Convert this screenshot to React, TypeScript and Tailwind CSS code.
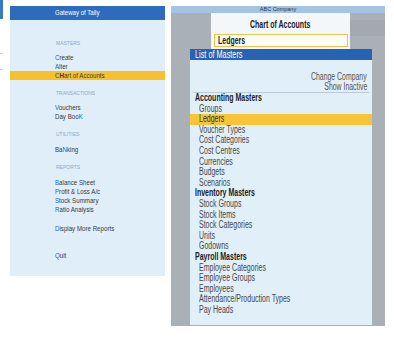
import React from "react";

type Row =
  | { kind: "label"; text: string; mt: string }
  | { kind: "item"; before?: string; hot: string; after: string; mt?: string; active?: boolean };

const GATEWAY: Row[] = [
  { kind: "label", text: "Masters", mt: "mt-[20px]" },
  { kind: "item", hot: "C", after: "reate", mt: "mt-[6.5px]" },
  { kind: "item", hot: "A", after: "lter" },
  { kind: "item", before: "C", hot: "H", after: "art of Accounts", active: true },
  { kind: "label", text: "Transactions", mt: "mt-[9.5px]" },
  { kind: "item", hot: "V", after: "ouchers", mt: "mt-[7px]" },
  { kind: "item", before: "Day Boo", hot: "K", after: "" },
  { kind: "label", text: "Utilities", mt: "mt-[10px]" },
  { kind: "item", before: "Ba", hot: "N", after: "king", mt: "mt-[8px]" },
  { kind: "label", text: "Reports", mt: "mt-[9.5px]" },
  { kind: "item", hot: "B", after: "alance Sheet", mt: "mt-[8px]" },
  { kind: "item", hot: "P", after: "rofit & Loss A/c" },
  { kind: "item", hot: "S", after: "tock Summary" },
  { kind: "item", hot: "R", after: "atio Analysis" },
  { kind: "item", hot: "D", after: "isplay More Reports", mt: "mt-[9px]" },
  { kind: "item", hot: "Q", after: "uit", mt: "mt-[18px]" },
];

const MASTERS: { heading: string; items: string[] }[] = [
  {
    heading: "Accounting Masters",
    items: ["Groups", "Ledgers", "Voucher Types", "Cost Categories", "Cost Centres", "Currencies", "Budgets", "Scenarios"],
  },
  {
    heading: "Inventory Masters",
    items: ["Stock Groups", "Stock Items", "Stock Categories", "Units", "Godowns"],
  },
  {
    heading: "Payroll Masters",
    items: ["Employee Categories", "Employee Groups", "Employees", "Attendance/Production Types", "Pay Heads"],
  },
];

// the screenshot is squeezed sideways (Arial Narrow style), so squash the glyphs
function Sq({
  children,
  cls = "origin-left scale-x-[0.7]",
}: {
  children: React.ReactNode;
  cls?: string;
}) {
  return <span className={`inline-block whitespace-nowrap ${cls}`}>{children}</span>;
}

function GatewayPanel() {
  return (
    <div className="mt-[6px] ml-[7px] flex h-[270px] w-[155px] flex-col bg-[#dfeef8]">
      <div className="flex h-[14px] items-center bg-[#2d6bbd] pl-[45px] text-[8px] text-white">
        <Sq cls="origin-left scale-x-[0.76]">Gateway of Tally</Sq>
      </div>
      {GATEWAY.map((row, i) =>
        row.kind === "label" ? (
          <div key={i} className={`${row.mt} pl-[46px] text-[5px] uppercase leading-[6px] text-[#8fa8c8]`}>
            {row.text}
          </div>
        ) : (
          <div
            key={i}
            className={`${row.mt ?? ""} pl-[45px] text-[8px] leading-[9.2px] text-[#3a3a3a] ${
              row.active ? "bg-[#f8c02c]" : ""
            }`}
          >
            <Sq cls="origin-left scale-x-[0.77]">
              {row.before}
              <span className={row.active ? "font-bold text-[#2b3a70]" : "text-[#2a62c0]"}>{row.hot}</span>
              {row.after}
            </Sq>
          </div>
        )
      )}
    </div>
  );
}

function ListOfMasters() {
  return (
    <div className="mb-[1px] ml-[19px] flex w-[182px] flex-1 flex-col bg-[#e0eff8]">
      <div className="flex h-[11px] items-center bg-[#2762b3] pl-[5px] text-[10px] text-white">
        <Sq cls="origin-left scale-x-[0.73]">List of Masters</Sq>
      </div>
      <div className="mx-[3px] border-b border-[#b9cad6] pt-[12px] pr-[2px] text-right text-[10px] leading-[10px] text-[#555]">
        <div>
          <Sq cls="origin-right scale-x-[0.69]">Change Company</Sq>
        </div>
        <div>
          <Sq cls="origin-right scale-x-[0.69]">Show Inactive</Sq>
        </div>
      </div>
      <div className="text-[10px] leading-[10.6px]">
        {MASTERS.map((group) => (
          <div key={group.heading}>
            <div className="pl-[5px] font-bold text-[#1c1c1c]">
              <Sq>{group.heading}</Sq>
            </div>
            {group.items.map((item) => (
              <div
                key={item}
                className={`pl-[9px] ${item === "Ledgers" ? "bg-[#f9c437] text-[#333]" : "text-[#484848]"}`}
              >
                <Sq>{item}</Sq>
              </div>
            ))}
          </div>
        ))}
      </div>
    </div>
  );
}

function ChartScreen() {
  return (
    <div className="mt-[6px] ml-[6px] flex h-[320px] w-[214px] flex-col bg-[#a9b1b7]">
      <div className="flex h-[7px] items-center justify-center bg-[#a3c4e2] text-[5.5px] leading-[7px] text-[#2a3550]">
        ABC Company
      </div>
      <div className="flex">
        <div className="ml-[40px] flex h-[36px] w-[139px] flex-col bg-[#f3f7fa]">
          <div className="pt-[7px] text-center text-[10px] font-bold leading-[10px] text-[#222]">
            <Sq cls="origin-center scale-x-[0.7]">Chart of Accounts</Sq>
          </div>
          <div className="mt-[4px] ml-[3px] flex h-[13px] w-[134px] items-center border border-[#f0c34a] bg-[#fdfdf8] pl-[3px] text-[10px] font-bold text-[#222]">
            <Sq>Ledgers</Sq>
          </div>
        </div>
        <div className="mt-[7px] h-[16px] flex-1 bg-[#a2aab0]" />
      </div>
      <ListOfMasters />
    </div>
  );
}

export default function App() {
  return (
    <div className="flex h-[340px] w-[394px] items-start bg-white font-['Liberation_Sans',Arial,sans-serif]">
      <div className="flex w-[3px] flex-col">
        <div className="h-[19px] bg-[#3a78c4]" />
        <div className="mt-[34px] h-px bg-[#c8ccd0]" />
        <div className="mt-[15px] h-px bg-[#c8ccd0]" />
      </div>
      <GatewayPanel />
      <ChartScreen />
    </div>
  );
}
